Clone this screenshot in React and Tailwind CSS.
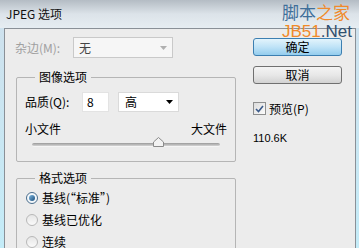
import React from "react";

const F = { fontFamily: '"Noto Sans CJK SC", "Noto Sans", sans-serif' };

function Arrow() {
  return (
    <svg width="7" height="4" viewBox="0 0 7 4"><path d="M0 0h7L3.5 4z" fill="#000" /></svg>
  );
}

function Radio({ checked, label }) {
  return (
    <div className="flex items-center h-[22px]">
      <div
        className={
          "w-[12px] h-[12px] rounded-full border flex items-center justify-center " +
          (checked ? "border-[#4a6d8c] bg-[#f4f8fb]" : "border-[#b8b8b8] bg-gradient-to-b from-[#e6e6e6] to-[#fafafa]")
        }
      >
        {checked && <div className="w-[6px] h-[6px] rounded-full bg-gradient-to-br from-[#7fb8e0] to-[#1b4f7c]" />}
      </div>
      <span className="ml-[4px] text-[12px] leading-none text-black">{label}</span>
    </div>
  );
}

export default function App() {
  return (
    <div
      className="w-[359px] h-[248px] overflow-hidden relative flex flex-col bg-gradient-to-b from-[#cfe0ec] to-[#c4ecf8]"
      style={F}
    >
      {/* title bar */}
      <div className="h-[28px] shrink-0 flex items-center pl-[6px] bg-gradient-to-b from-[#b4bcc4] via-[#dce3e9] to-[#e6edf2]">
        <span className="text-[12px] text-[#111] leading-none">JPEG 选项</span>
      </div>
      {/* client */}
      <div className="flex-1 ml-[4px] mr-[3px] border-l border-t border-r border-[#8a9097] bg-[#ececec] flex pt-[8px]">
        <div className="w-[232px] shrink-0 flex flex-col">
          <div className="flex items-center h-[21px] pl-[10px]">
            <span className="text-[12px] text-[#a0a0a0] w-[58px]">杂边(M):</span>
            <div className="w-[100px] h-[21px] border border-[#c9c9c9] bg-[#f6f6f6] flex items-center justify-between pl-[5px] pr-[5px]">
              <span className="text-[12px] text-[#444]">无</span>
              <svg width="7" height="4" viewBox="0 0 7 4"><path d="M0 0h7L3.5 4z" fill="#b0b0b0" /></svg>
            </div>
          </div>
          {/* group 1 */}
          <div className="relative ml-[11px] mt-[19px] w-[220px] h-[85px] border border-[#b5b5b5] rounded-[2px]">
            <span className="absolute -top-[8px] left-[18px] bg-[#ececec] px-[4px] text-[12px] leading-[14px] text-black">图像选项</span>
            <div className="flex items-center mt-[14px] pl-[8px]">
              <span className="text-[12px] text-black w-[57px]">品质(Q):</span>
              <div className="w-[27px] h-[20px] bg-white border border-[#e3e3e3] flex items-center pl-[4px] text-[12px] leading-none">8</div>
              <div className="ml-[9px] w-[61px] h-[20px] bg-white border border-[#dadada] flex items-center justify-between pl-[6px] pr-[5px]">
                <span className="text-[12px] leading-none text-black">高</span>
                <Arrow />
              </div>
            </div>
            <div className="flex justify-between pl-[8px] pr-[8px] mt-[11px] text-[12px] leading-none">
              <span>小文件</span>
              <span>大文件</span>
            </div>
            <div className="relative mx-[15px] mt-[8px] h-[4px] rounded-full bg-gradient-to-b from-[#9a9a9a] to-[#d4d4d4] border-b border-[#f5f5f5]">
              <svg className="absolute" style={{ left: 121, top: -6 }} width="11" height="10" viewBox="0 0 11 10">
                <path d="M0.5 9.5V5L5.5 0.5 10.5 5v4.5z" fill="#f2f2f2" stroke="#8a8a8a" />
              </svg>
            </div>
          </div>
          {/* group 2 */}
          <div className="relative ml-[11px] mt-[16px] w-[220px] h-[90px] border border-[#b5b5b5] rounded-[2px] pl-[9px] pt-[8px]">
            <span className="absolute -top-[8px] left-[18px] bg-[#ececec] px-[4px] text-[12px] leading-[14px] text-black">格式选项</span>
            <Radio checked label="基线(“标准”)" />
            <Radio label="基线已优化" />
            <Radio label="连续" />
          </div>
        </div>
        {/* right column */}
        <div className="ml-[16px] flex flex-col pt-[1px]">
          <div className="w-[89px] h-[18px] rounded-[3px] border border-[#3c7fb1] bg-gradient-to-b from-[#e3f4fc] via-[#bfe3f7] to-[#94cdee] flex items-center justify-center text-[12px] leading-none text-black">
            确定
          </div>
          <div className="mt-[10px] w-[89px] h-[18px] rounded-[3px] border border-[#707070] bg-gradient-to-b from-[#f4f4f4] via-[#e8e8e8] to-[#d2d2d2] flex items-center justify-center text-[12px] leading-none text-black">
            取消
          </div>
          <div className="mt-[18px] flex items-center">
            <div className="w-[13px] h-[13px] border border-[#8e8f8f] bg-gradient-to-br from-[#dcdcdc] to-[#fcfcfc] flex items-center justify-center">
              <svg width="9" height="8" viewBox="0 0 9 8"><path d="M1 4l2.5 2.5L8 1" fill="none" stroke="#3a5a8a" strokeWidth="1.6" /></svg>
            </div>
            <span className="ml-[3px] text-[12px] leading-none text-black">预览(P)</span>
          </div>
          <span className="mt-[18px] text-[11px] leading-none text-black" style={{ fontFamily: '"Liberation Sans", sans-serif' }}>110.6K</span>
        </div>
      </div>
      {/* watermark */}
      <div className="absolute top-[1px] left-[282px] flex flex-col items-start pointer-events-none">
        <div className="text-[17px] leading-[21px]">
          <span className="text-[#3f6f9a]">脚本</span>
          <span className="text-[#f08a2a]">之家</span>
        </div>
        <div className="text-[17px] leading-[19px]" style={{ fontFamily: '"Liberation Sans", sans-serif' }}>
          <span className="text-[#f08a2a]">JB51</span>
          <span className="text-[#2f4f6f]">.Net</span>
        </div>
      </div>
    </div>
  );
}
